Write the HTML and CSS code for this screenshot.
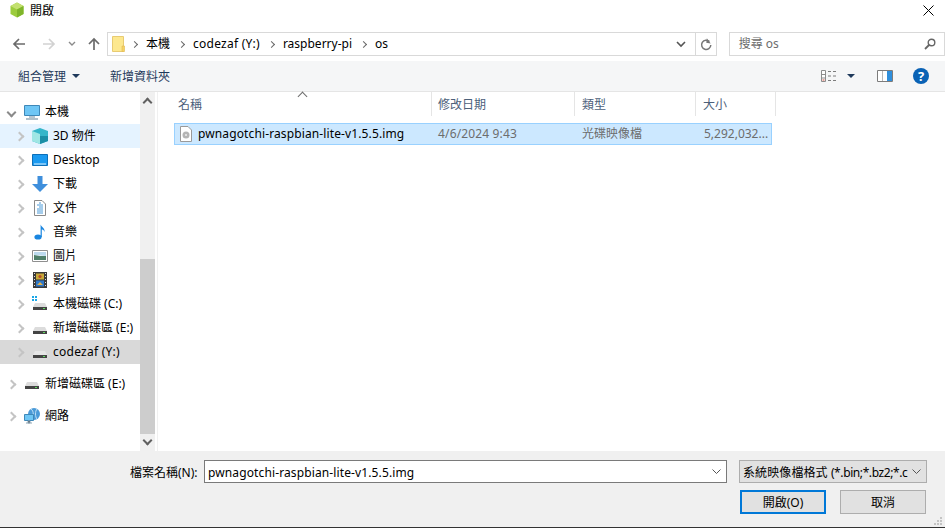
FILE: index.html
```html
<!DOCTYPE html>
<html lang="zh-Hant">
<head>
  <meta charset="UTF-8" />
  <title>開啟</title>
  <link rel="stylesheet" href="styles.css">
</head>
<body>
  <div class="dialog">
    <!-- Title bar -->
    <div class="titlebar">
      <svg class="app-icon" width="16" height="16" viewBox="0 0 16 16">
        <path d="M8 0.5 14.5 4 14.5 12 8 15.5 1.5 12 1.5 4Z" fill="#9ccc3c"/>
        <path d="M8 0.5 14.5 4 8 7.5 1.5 4Z" fill="#c3e070"/>
        <path d="M8 7.5 14.5 4 14.5 12 8 15.5Z" fill="#7fb52a"/>
      </svg>
      <span class="title-text">開啟</span>
      <svg class="close-icon" width="11" height="11" viewBox="0 0 11 11">
        <path d="M0.5 0.5 10.5 10.5M10.5 0.5 0.5 10.5" stroke="#000" stroke-width="1" fill="none"/>
      </svg>
    </div>

    <!-- Navigation row -->
    <div class="navbar">
      <svg class="nav-btn" width="14" height="14" viewBox="0 0 14 14">
        <path d="M13 7H2M7 2 2 7 7 12" stroke="#6b6b6b" stroke-width="1.7" fill="none"/>
      </svg>
      <svg class="nav-btn nav-forward" width="14" height="14" viewBox="0 0 14 14">
        <path d="M1 7H12M7 2 12 7 7 12" stroke="#d2d2d2" stroke-width="1.7" fill="none"/>
      </svg>
      <svg class="nav-btn nav-recent" width="8" height="6" viewBox="0 0 8 6">
        <path d="M1 1 4 4 7 1" stroke="#8a8a8a" stroke-width="1.4" fill="none"/>
      </svg>
      <svg class="nav-btn nav-up" width="14" height="14" viewBox="0 0 14 14">
        <path d="M7 13V2M2 7 7 2 12 7" stroke="#6b6b6b" stroke-width="1.7" fill="none"/>
      </svg>
      <div class="address">
        <svg class="address-folder" width="13" height="16" viewBox="0 0 13 16">
          <path d="M0.5 0.5H11.5V15.5H0.5Z" fill="#fde88f" stroke="#e8cb72"/>
          <path d="M10 10H12.5V15.5H10Z" fill="#f6d365" stroke="#e0b850" stroke-width="0.6"/>
        </svg>
        <span class="crumb-sep"></span><span class="crumb">本機</span>
        <span class="crumb-sep"></span><span class="crumb crumb-wide">codezaf (Y:)</span>
        <span class="crumb-sep"></span><span class="crumb">raspberry-pi</span>
        <span class="crumb-sep"></span><span class="crumb">os</span>
        <div class="address-end">
          <svg width="10" height="7" viewBox="0 0 10 7"><path d="M1 1 5 5 9 1" stroke="#555" stroke-width="1.6" fill="none"/></svg>
        </div>
        <div class="address-refresh">
          <svg width="12" height="13" viewBox="0 0 12 13">
            <path d="M9.5 3.6A4.6 4.6 0 1 0 10.8 7" stroke="#777" stroke-width="1.5" fill="none"/>
            <path d="M6.5 0.5V5H11Z" fill="#777" transform="rotate(8 8 3)"/>
          </svg>
        </div>
      </div>
      <div class="search">
        <span class="search-text">搜尋 os</span>
        <svg width="12" height="12" viewBox="0 0 12 12">
          <circle cx="7.5" cy="4.5" r="3.3" stroke="#666" stroke-width="1.4" fill="none"/>
          <path d="M5 7 1 11" stroke="#666" stroke-width="1.8"/>
        </svg>
      </div>
    </div>

    <!-- Command bar -->
    <div class="toolbar">
      <span class="tool">組合管理</span>
      <span class="tool-caret"></span>
      <span class="tool tool-new">新增資料夾</span>
      <div class="tool-right">
        <svg class="view-icon" width="16" height="12" viewBox="0 0 16 12">
          <path d="M0.5 0.5H4.5V11.5H0.5Z" fill="#fff" stroke="#8d8d8d"/>
          <path d="M0.5 4.5H4.5M0.5 8H4.5" stroke="#8d8d8d"/>
          <path d="M1.5 10H3.5" stroke="#d04a3a"/>
          <path d="M7 1.5H10M12 1.5H15M7 6H10M12 6H15M7 10.5H10M12 10.5H15" stroke="#7c7c7c"/>
        </svg>
        <span class="tool-caret view-caret"></span>
        <svg class="pane-icon" width="16" height="12" viewBox="0 0 16 12">
          <path d="M0.5 0.5H15.5V11.5H0.5Z" fill="#fff" stroke="#7c7c7c"/>
          <path d="M10 1H15V11H10Z" fill="#2f8fdc"/>
          <path d="M5.5 1V11" stroke="#b8b8b8"/>
        </svg>
        <div class="help-icon">?</div>
      </div>
    </div>

    <!-- Tree + list -->
    <div class="main">
      <div class="tree">
        <div class="tree-row tree-top">
          <span class="chev chev-open"></span>
          <svg class="tree-icon" width="16" height="16" viewBox="0 0 16 16">
            <path d="M0.5 1.5H15.5V11.5H0.5Z" fill="#6ec6f5" stroke="#3f88b8"/>
            <path d="M5 12H11V14H5Z" fill="#b7c6d0"/>
            <path d="M2 15H14" stroke="#8fa5b3" stroke-width="1.4"/>
          </svg>
          <span class="tree-text">本機</span>
        </div>
        <div class="tree-row tree-hover">
          <span class="chev"></span>
          <svg class="tree-icon" width="16" height="16" viewBox="0 0 16 16">
            <path d="M8 0 16 3V13L8 16 0 13V3Z" fill="#35b6c9"/>
            <path d="M0 3 8 6V16L0 13Z" fill="#9fe6e4"/>
            <path d="M8 8H16V13L8 16Z" fill="#1b8fa6"/>
          </svg>
          <span class="tree-text">3D 物件</span>
        </div>
        <div class="tree-row">
          <span class="chev"></span>
          <svg class="tree-icon" width="16" height="16" viewBox="0 0 16 16">
            <path d="M0.5 2.5H15.5V13.5H0.5Z" fill="#1b9af0" stroke="#0d6fb8"/>
            <path d="M2 12H14" stroke="#dff1fd"/>
          </svg>
          <span class="tree-text">Desktop</span>
        </div>
        <div class="tree-row">
          <span class="chev"></span>
          <svg class="tree-icon" width="16" height="16" viewBox="0 0 16 16">
            <path d="M5.5 0H10.5V8H16L8 16 0 8H5.5Z" fill="#3f8fdc"/>
          </svg>
          <span class="tree-text">下載</span>
        </div>
        <div class="tree-row">
          <span class="chev"></span>
          <svg class="tree-icon" width="16" height="16" viewBox="0 0 16 16">
            <path d="M2.5 0.5H10L13.5 4V15.5H2.5Z" fill="#fff" stroke="#8a8a8a"/>
            <path d="M5 5H11M7 7H11M5 9H11M5 11H11M5 13H11" stroke="#4a9ad8"/>
            <path d="M7 3H9" stroke="#4a9ad8"/>
          </svg>
          <span class="tree-text">文件</span>
        </div>
        <div class="tree-row">
          <span class="chev"></span>
          <svg class="tree-icon" width="16" height="16" viewBox="0 0 16 16">
            <ellipse cx="6" cy="13" rx="3.6" ry="2.6" fill="#1a86e0"/>
            <path d="M8.6 13V0.5C9.5 3 13 4 12.6 8 11.6 5.5 10 5.5 9.8 5.5V13Z" fill="#1a86e0"/>
          </svg>
          <span class="tree-text">音樂</span>
        </div>
        <div class="tree-row">
          <span class="chev"></span>
          <svg class="tree-icon" width="16" height="16" viewBox="0 0 16 16">
            <path d="M0.5 2.5H15.5V13.5H0.5Z" fill="#fff" stroke="#8f8f8f"/>
            <path d="M2 4H14V8L2 7Z" fill="#bcd9ee"/>
            <path d="M2 7 8 8 14 8V12H2Z" fill="#4f7f6a"/>
          </svg>
          <span class="tree-text">圖片</span>
        </div>
        <div class="tree-row">
          <span class="chev"></span>
          <svg class="tree-icon" width="16" height="16" viewBox="0 0 16 16">
            <path d="M1 0H15V16H1Z" fill="#3a3a3a"/>
            <path d="M2 1H3V2H2ZM2 4H3V5H2ZM2 7H3V8H2ZM2 10H3V11H2ZM2 13H3V14H2ZM13 1H14V2H13ZM13 4H14V5H13ZM13 7H14V8H13ZM13 10H14V11H13ZM13 13H14V14H13Z" fill="#ddd"/>
            <path d="M4 1.5H12V7.5H4Z" fill="#c9a93a"/>
            <path d="M4 8.5H12V14.5H4Z" fill="#2d77c9"/>
            <circle cx="8" cy="4.5" r="1.6" fill="#b84a2a"/>
            <path d="M5 13 8 10 11 13Z" fill="#e0b04a"/>
          </svg>
          <span class="tree-text">影片</span>
        </div>
        <div class="tree-row">
          <span class="chev"></span>
          <svg class="tree-icon" width="16" height="16" viewBox="0 0 16 16">
            <path d="M0 0H2V2H0ZM3 0H5V2H3ZM0 3H2V5H0ZM3 3H5V5H3Z" fill="#19a7e8"/>
            <path d="M3 7H13L15 11H1Z" fill="#dcdcdc"/>
            <path d="M1 11H15V14H1Z" fill="#444"/>
            <path d="M11 12H13V13H11Z" fill="#5fdc5f"/>
          </svg>
          <span class="tree-text">本機磁碟 (C:)</span>
        </div>
        <div class="tree-row">
          <span class="chev"></span>
          <svg class="tree-icon" width="16" height="16" viewBox="0 0 16 16">
            <path d="M3 7H13L15 11H1Z" fill="#dcdcdc"/>
            <path d="M1 11H15V14H1Z" fill="#444"/>
            <path d="M11 12H13V13H11Z" fill="#5fdc5f"/>
          </svg>
          <span class="tree-text">新增磁碟區 (E:)</span>
        </div>
        <div class="tree-row tree-selected">
          <span class="chev"></span>
          <svg class="tree-icon" width="16" height="16" viewBox="0 0 16 16">
            <path d="M3 7H13L15 11H1Z" fill="#e6e6e6"/>
            <path d="M1 11H15V14H1Z" fill="#444"/>
            <path d="M11 12H13V13H11Z" fill="#5fdc5f"/>
          </svg>
          <span class="tree-text crumb-wide">codezaf (Y:)</span>
        </div>
        <div class="tree-row tree-top tree-gap">
          <span class="chev"></span>
          <svg class="tree-icon" width="16" height="16" viewBox="0 0 16 16">
            <path d="M3 6H13L15 10H1Z" fill="#dcdcdc"/>
            <path d="M1 10H15V13H1Z" fill="#444"/>
            <path d="M11 11H13V12H11Z" fill="#5fdc5f"/>
          </svg>
          <span class="tree-text">新增磁碟區 (E:)</span>
        </div>
        <div class="tree-row tree-top tree-gap">
          <span class="chev"></span>
          <svg class="tree-icon" width="16" height="16" viewBox="0 0 16 16">
            <circle cx="10" cy="6" r="6" fill="#4a9ad8"/>
            <path d="M7 1C10 3 10 9 7 11M13 1C11 3 11 9 13 11" stroke="#bfe0f5" fill="none"/>
            <path d="M0.5 6.5H9.5V12.5H0.5Z" fill="#6ec6f5" stroke="#3f88b8"/>
            <path d="M4 13H6V15H4ZM2 15H8" stroke="#8fa5b3"/>
          </svg>
          <span class="tree-text">網路</span>
        </div>
      </div>

      <div class="scrollbar">
        <div class="scroll-btn"><span class="scroll-chev scroll-up"></span></div>
        <div class="scroll-track"><div class="scroll-thumb"></div></div>
        <div class="scroll-btn"><span class="scroll-chev scroll-down"></span></div>
      </div>

      <div class="files">
        <div class="file-head">
          <span class="sort-caret"></span>
          <div class="col col-name">名稱</div>
          <div class="col col-date">修改日期</div>
          <div class="col col-type">類型</div>
          <div class="col col-size">大小</div>
        </div>
        <div class="file-row">
          <div class="cell cell-name">
            <svg width="12" height="16" viewBox="0 0 12 16">
              <path d="M0.5 0.5H8L11.5 4V15.5H0.5Z" fill="#fff" stroke="#9a9a9a"/>
              <circle cx="6" cy="9" r="3.5" fill="#b5b5b5"/>
              <circle cx="6" cy="9" r="1" fill="#eee"/>
            </svg>
            <span class="file-name">pwnagotchi-raspbian-lite-v1.5.5.img</span>
          </div>
          <div class="cell cell-date">4/6/2024 9:43</div>
          <div class="cell cell-type">光碟映像檔</div>
          <div class="cell cell-size">5,292,032...</div>
        </div>
      </div>
    </div>

    <!-- Bottom panel -->
    <div class="footer">
      <div class="footer-line">
        <label class="file-label">檔案名稱(N):</label>
        <div class="file-input">
          <span class="file-name">pwnagotchi-raspbian-lite-v1.5.5.img</span>
          <svg width="9" height="6" viewBox="0 0 9 6"><path d="M0.5 0.5 4.5 4.5 8.5 0.5" stroke="#555" fill="none"/></svg>
        </div>
        <div class="file-filter">
          <span class="filter-text">系統映像檔格式 <span class="filter-ext">(*.bin;*.bz2;*.c</span></span>
          <svg width="9" height="6" viewBox="0 0 9 6"><path d="M0.5 0.5 4.5 4.5 8.5 0.5" stroke="#555" fill="none"/></svg>
        </div>
      </div>
      <div class="footer-buttons">
        <button class="btn btn-default">開啟(O)</button>
        <button class="btn">取消</button>
      </div>
      <svg class="grip" width="10" height="10" viewBox="0 0 10 10">
        <path d="M7 1H9V3H7ZM4 4H6V6H4ZM7 4H9V6H7ZM1 7H3V9H1ZM4 7H6V9H4ZM7 7H9V9H7Z" fill="#c4c4c4"/>
      </svg>
    </div>
  </div>
</body>
</html>
```

FILE: styles.css
```css
html, body {
  margin: 0;
  height: 100%;
  overflow: hidden;
}
body {
  font-family: "Noto Sans", "Noto Sans CJK TC", sans-serif;
  font-size: 12px;
  color: #000;
  background: #fff;
}
svg {
  display: block;
  flex: none;
}

.dialog {
  width: 945px;
  height: 528px;
  display: flex;
  flex-direction: column;
  box-sizing: border-box;
  border-bottom: 1px solid #333;
}

/* title bar */
.titlebar {
  height: 20px;
  display: flex;
  align-items: center;
  padding: 0 9px;
  flex: none;
}
.title-text {
  margin-left: 5px;
}
.close-icon {
  margin-left: auto;
  margin-right: 2px;
}

/* navigation */
.navbar {
  height: 41px;
  flex: none;
  display: flex;
  align-items: flex-start;
  padding-left: 12px;
}
.nav-btn {
  margin-top: 17px;
}
.nav-forward {
  margin-left: 16px;
}
.nav-recent {
  margin-left: 12px;
  margin-top: 21px;
}
.nav-up {
  margin-left: 11px;
}
.address {
  width: 612px;
  height: 22px;
  margin-left: 6px;
  margin-top: 12px;
  border: 1px solid #d9d9d9;
  display: flex;
  align-items: center;
  padding-left: 4px;
}
.crumb-sep {
  width: 4px;
  height: 4px;
  margin: 0 9px 0 7px;
  border-top: 1.5px solid #666;
  border-right: 1.5px solid #666;
  transform: rotate(45deg);
}
.crumb {
  margin: -2px 2px 0 0;
}
.crumb-wide {
  letter-spacing: 0.25px;
}
.address-end {
  margin-left: auto;
  width: 27px;
  height: 100%;
  display: flex;
  align-items: center;
  justify-content: center;
  border-right: 1px solid #d9d9d9;
}
.address-refresh {
  width: 20px;
  height: 100%;
  display: flex;
  align-items: center;
  justify-content: center;
}
.search {
  width: 200px;
  height: 22px;
  margin-left: 12px;
  margin-top: 12px;
  border: 1px solid #d9d9d9;
  display: flex;
  align-items: center;
  justify-content: space-between;
  padding: 0 8px 0 9px;
  color: #6d6d6d;
}
.search-text {
  margin-top: -2px;
}

/* command bar */
.toolbar {
  height: 30px;
  flex: none;
  background: #f5f6f7;
  border-bottom: 1px solid #e5e5e5;
  display: flex;
  align-items: center;
  padding-left: 18px;
  color: #1e395b;
}
.tool-caret {
  width: 0;
  height: 0;
  margin-left: 6px;
  border-left: 4px solid transparent;
  border-right: 4px solid transparent;
  border-top: 4px solid #1e395b;
}
.tool-new {
  margin-left: 30px;
}
.tool-right {
  margin-left: auto;
  display: flex;
  align-items: center;
  padding-right: 16px;
}
.view-caret {
  margin-left: 10px;
}
.pane-icon {
  margin-left: 22px;
}
.help-icon {
  width: 16px;
  height: 16px;
  margin-left: 20px;
  border-radius: 50%;
  background: #0a62b5;
  color: #fff;
  font-weight: 700;
  font-size: 13px;
  line-height: 16px;
  text-align: center;
}

/* tree */
.main {
  flex: 1;
  display: flex;
  min-height: 0;
}
.tree {
  width: 140px;
  flex: none;
  padding-top: 8px;
  box-sizing: border-box;
}
.tree-row {
  height: 24px;
  display: flex;
  align-items: center;
  white-space: nowrap;
  padding-left: 16px;
}
.tree-text {
  margin-top: -2px;
}
.tree-top {
  padding-left: 8px;
}
.tree-hover {
  background: #e5f3ff;
}
.tree-selected {
  background: #d9d9d9;
}
.tree-gap {
  margin-top: 8px;
}
.chev {
  width: 5px;
  height: 5px;
  margin: 0 9px 0 0;
  border-top: 2px solid #c4c4c4;
  border-right: 2px solid #c4c4c4;
  transform: rotate(45deg);
  flex: none;
}
.chev-open {
  border-color: #8a8a8a;
  transform: rotate(135deg);
}
.tree-icon {
  margin-right: 5px;
}

/* scrollbar */
.scrollbar {
  width: 15px;
  flex: none;
  background: #f0f0f0;
  display: flex;
  flex-direction: column;
}
.scroll-btn {
  height: 17px;
  display: flex;
  align-items: center;
  justify-content: center;
  flex: none;
}
.scroll-chev {
  width: 5px;
  height: 5px;
  border-top: 2px solid #606060;
  border-right: 2px solid #606060;
}
.scroll-up {
  transform: translateY(2px) rotate(-45deg);
}
.scroll-down {
  transform: translateY(-2px) rotate(135deg);
}
.scroll-track {
  flex: 1;
  padding-top: 150px;
  display: flex;
}
.scroll-thumb {
  flex: 1;
  background: #cdcdcd;
}

/* file list */
.files {
  flex: 1;
  margin-left: 2px;
  border-left: 1px solid #f0f0f0;
  padding-left: 16px;
  position: relative;
}
.file-head {
  height: 24px;
  display: flex;
  color: #4c607a;
}
.sort-caret {
  position: absolute;
  left: 141px;
  top: 1px;
  width: 6px;
  height: 6px;
  border-top: 1px solid #6d6d6d;
  border-left: 1px solid #6d6d6d;
  transform: rotate(45deg);
}
.col {
  display: flex;
  align-items: center;
  padding-left: 7px;
  box-sizing: border-box;
  border-right: 1px solid #e5e5e5;
}
.col-name {
  width: 258px;
  padding-left: 4px;
}
.col-date {
  width: 143px;
  padding-left: 6px;
}
.col-type {
  width: 121px;
}
.col-size {
  width: 80px;
}
.file-row {
  width: 598px;
  height: 22px;
  margin-top: 7px;
  box-sizing: border-box;
  background: #cce8ff;
  border: 1px solid #99d1ff;
  display: flex;
  align-items: center;
  color: #6d6d6d;
}
.cell {
  white-space: nowrap;
  margin-top: -2px;
}
.cell-name {
  width: 263px;
  display: flex;
  align-items: center;
  padding-left: 5px;
  box-sizing: border-box;
  color: #000;
  gap: 6px;
  margin-top: 0;
}
.cell-name .file-name {
  margin-top: -2px;
}
.file-name {
  letter-spacing: 0.12px;
}
.cell-date {
  width: 144px;
  letter-spacing: 0.15px;
}
.cell-type {
  width: 122px;
}

/* bottom panel */
.footer {
  height: 76px;
  flex: none;
  background: #f0f0f0;
  padding-top: 9px;
  box-sizing: border-box;
  position: relative;
}
.footer-line {
  display: flex;
  align-items: center;
  padding-left: 130px;
}
.file-label {
  width: 74px;
  flex: none;
  white-space: nowrap;
  margin-top: 1px;
}
.file-input {
  width: 523px;
  height: 23px;
  flex: none;
  box-sizing: border-box;
  background: #fff;
  border: 1px solid #7a7a7a;
  display: flex;
  align-items: center;
  justify-content: space-between;
  padding: 1px 5px 0 3px;
}
.file-filter {
  width: 188px;
  height: 23px;
  flex: none;
  margin-left: 12px;
  box-sizing: border-box;
  background: #e1e1e1;
  border: 1px solid #adadad;
  display: flex;
  align-items: center;
  padding: 1px 5px 0 3px;
  justify-content: space-between;
}
.filter-text {
  white-space: nowrap;
  letter-spacing: 0.1px;
}
.filter-ext {
  letter-spacing: -0.4px;
}
.footer-buttons {
  display: flex;
  gap: 14px;
  margin-top: 7px;
  padding-left: 740px;
}
.btn {
  width: 86px;
  height: 24px;
  padding: 0;
  box-sizing: border-box;
  background: #e1e1e1;
  border: 1px solid #adadad;
  font: inherit;
  color: #000;
}
.btn-default {
  border: 2px solid #0078d7;
}
.grip {
  position: absolute;
  right: 2px;
  bottom: 1px;
}
```
